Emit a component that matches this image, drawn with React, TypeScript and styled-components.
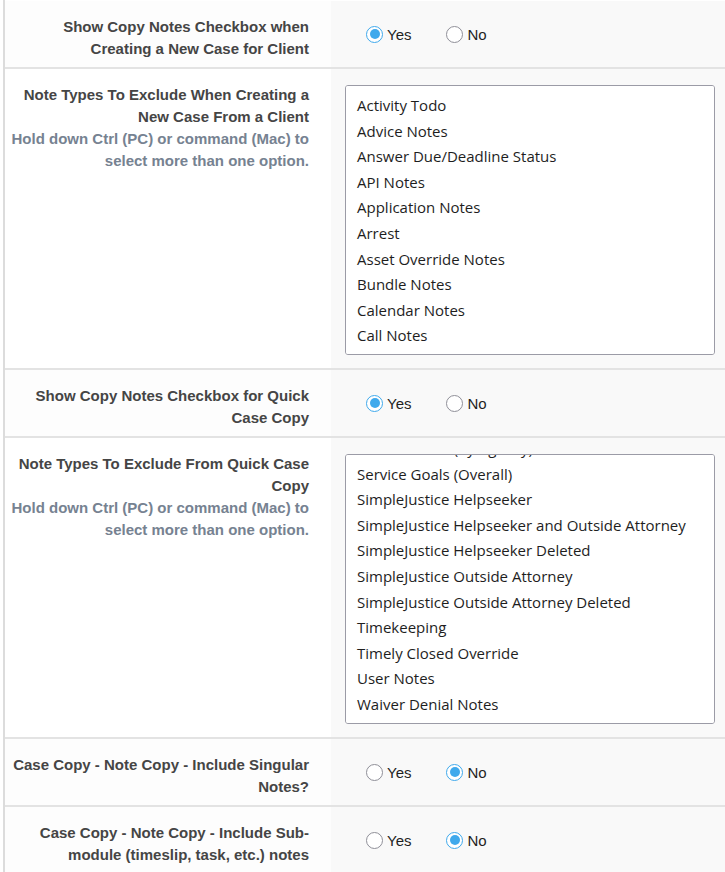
import React, { useEffect, useRef } from "react";
import styled, { createGlobalStyle } from "styled-components";

const Global = createGlobalStyle`
  html, body { margin: 0; padding: 0; background: #fff; }
  body { font-family: "Liberation Sans", Arial, sans-serif; }
  * { box-sizing: border-box; }
`;

const Page = styled.div`
  margin-left: 3px;
  padding-top: 1px;
  border-left: 2px solid #dcdcdc;
  width: 722px;
`;

const Row = styled.div`
  display: grid;
  grid-template-columns: 326px 1fr;
  border-bottom: 2px solid #e3e3e3;
`;

const Label = styled.div<{ $bg?: string }>`
  background: ${(p) => p.$bg || "#fdfdfd"};
  padding: 15px 22px 7px 6px;
  text-align: right;
  font: bold 15px/22px "Liberation Sans", Arial, sans-serif;
  color: #454545;
`;

const Hint = styled.div`
  color: #768291;
`;

const Value = styled.div<{ $center?: boolean }>`
  background: #f9f9f9;
  display: flex;
  align-items: ${(p) => (p.$center ? "center" : "flex-start")};
  padding: ${(p) => (p.$center ? "0 0 0 35px" : "16px 10px 13px 14px")};
`;

const RadioGroup = styled.div`
  display: flex;
  align-items: center;
  gap: 35px;
`;

const RadioLabel = styled.label`
  display: flex;
  align-items: center;
  gap: 4px;
  font: 15px "Liberation Sans", Arial, sans-serif;
  color: #1f1f1f;
`;

const Circle = styled.span<{ $on?: boolean }>`
  width: 17px;
  height: 17px;
  border-radius: 50%;
  border: ${(p) => (p.$on ? "1.5px solid #3fa9ec" : "1px solid #8f8f98")};
  background: #fff;
  display: flex;
  align-items: center;
  justify-content: center;
  &::after {
    content: "";
    display: ${(p) => (p.$on ? "block" : "none")};
    width: 10px;
    height: 10px;
    border-radius: 50%;
    background: #3fa9ec;
  }
`;

const ListBox = styled.div`
  width: 370px;
  height: 270px;
  border: 1px solid #9b9ba6;
  border-radius: 3px;
  background: #fff;
  overflow-y: auto;
  padding: 7px 0 6px;
  scrollbar-width: none;
  &::-webkit-scrollbar { display: none; }
`;

const Option = styled.div`
  padding-left: 11px;
  font: 15px/25.6px "Open Sans", sans-serif;
  color: #1e1e1e;
  white-space: nowrap;
`;

const list1 = [
  "Activity Todo",
  "Advice Notes",
  "Answer Due/Deadline Status",
  "API Notes",
  "Application Notes",
  "Arrest",
  "Asset Override Notes",
  "Bundle Notes",
  "Calendar Notes",
  "Call Notes",
  "Case Notes",
  "Conflict Notes",
];

const list2 = [
  "Activity Todo",
  "Advice Notes",
  "Answer Due/Deadline Status",
  "API Notes",
  "Application Notes",
  "Arrest",
  "Asset Override Notes",
  "Bundle Notes",
  "Calendar Notes",
  "Call Notes",
  "Service Goals (by Agency)",
  "Service Goals (Overall)",
  "SimpleJustice Helpseeker",
  "SimpleJustice Helpseeker and Outside Attorney",
  "SimpleJustice Helpseeker Deleted",
  "SimpleJustice Outside Attorney",
  "SimpleJustice Outside Attorney Deleted",
  "Timekeeping",
  "Timely Closed Override",
  "User Notes",
  "Waiver Denial Notes",
];

function Select({ items, bottom }: { items: string[]; bottom?: boolean }) {
  const ref = useRef<HTMLDivElement>(null);
  useEffect(() => {
    if (bottom && ref.current) ref.current.scrollTop = ref.current.scrollHeight;
  }, [bottom]);
  return (
    <ListBox ref={ref}>
      {items.map((t) => (
        <Option key={t}>{t}</Option>
      ))}
    </ListBox>
  );
}

function Radios({ yes }: { yes: boolean }) {
  return (
    <RadioGroup>
      <RadioLabel>
        <Circle $on={yes} />
        Yes
      </RadioLabel>
      <RadioLabel>
        <Circle $on={!yes} />
        No
      </RadioLabel>
    </RadioGroup>
  );
}

export default function App() {
  return (
    <>
      <Global />
      <Page>
        <Row>
          <Label>
            Show Copy Notes Checkbox when
            <br />
            Creating a New Case for Client
          </Label>
          <Value $center>
            <Radios yes />
          </Value>
        </Row>
        <Row>
          <Label $bg="#fff">
            Note Types To Exclude When Creating a New Case From a Client
            <Hint>Hold down Ctrl (PC) or command (Mac) to select more than one option.</Hint>
          </Label>
          <Value>
            <Select items={list1} />
          </Value>
        </Row>
        <Row>
          <Label>
            Show Copy Notes Checkbox for Quick Case Copy
          </Label>
          <Value $center>
            <Radios yes />
          </Value>
        </Row>
        <Row>
          <Label $bg="#fff">
            Note Types To Exclude From Quick Case Copy
            <Hint>Hold down Ctrl (PC) or command (Mac) to select more than one option.</Hint>
          </Label>
          <Value>
            <Select items={list2} bottom />
          </Value>
        </Row>
        <Row>
          <Label>Case Copy - Note Copy - Include Singular Notes?</Label>
          <Value $center>
            <Radios yes={false} />
          </Value>
        </Row>
        <Row>
          <Label>Case Copy - Note Copy - Include Sub-module (timeslip, task, etc.) notes</Label>
          <Value $center>
            <Radios yes={false} />
          </Value>
        </Row>
      </Page>
    </>
  );
}
